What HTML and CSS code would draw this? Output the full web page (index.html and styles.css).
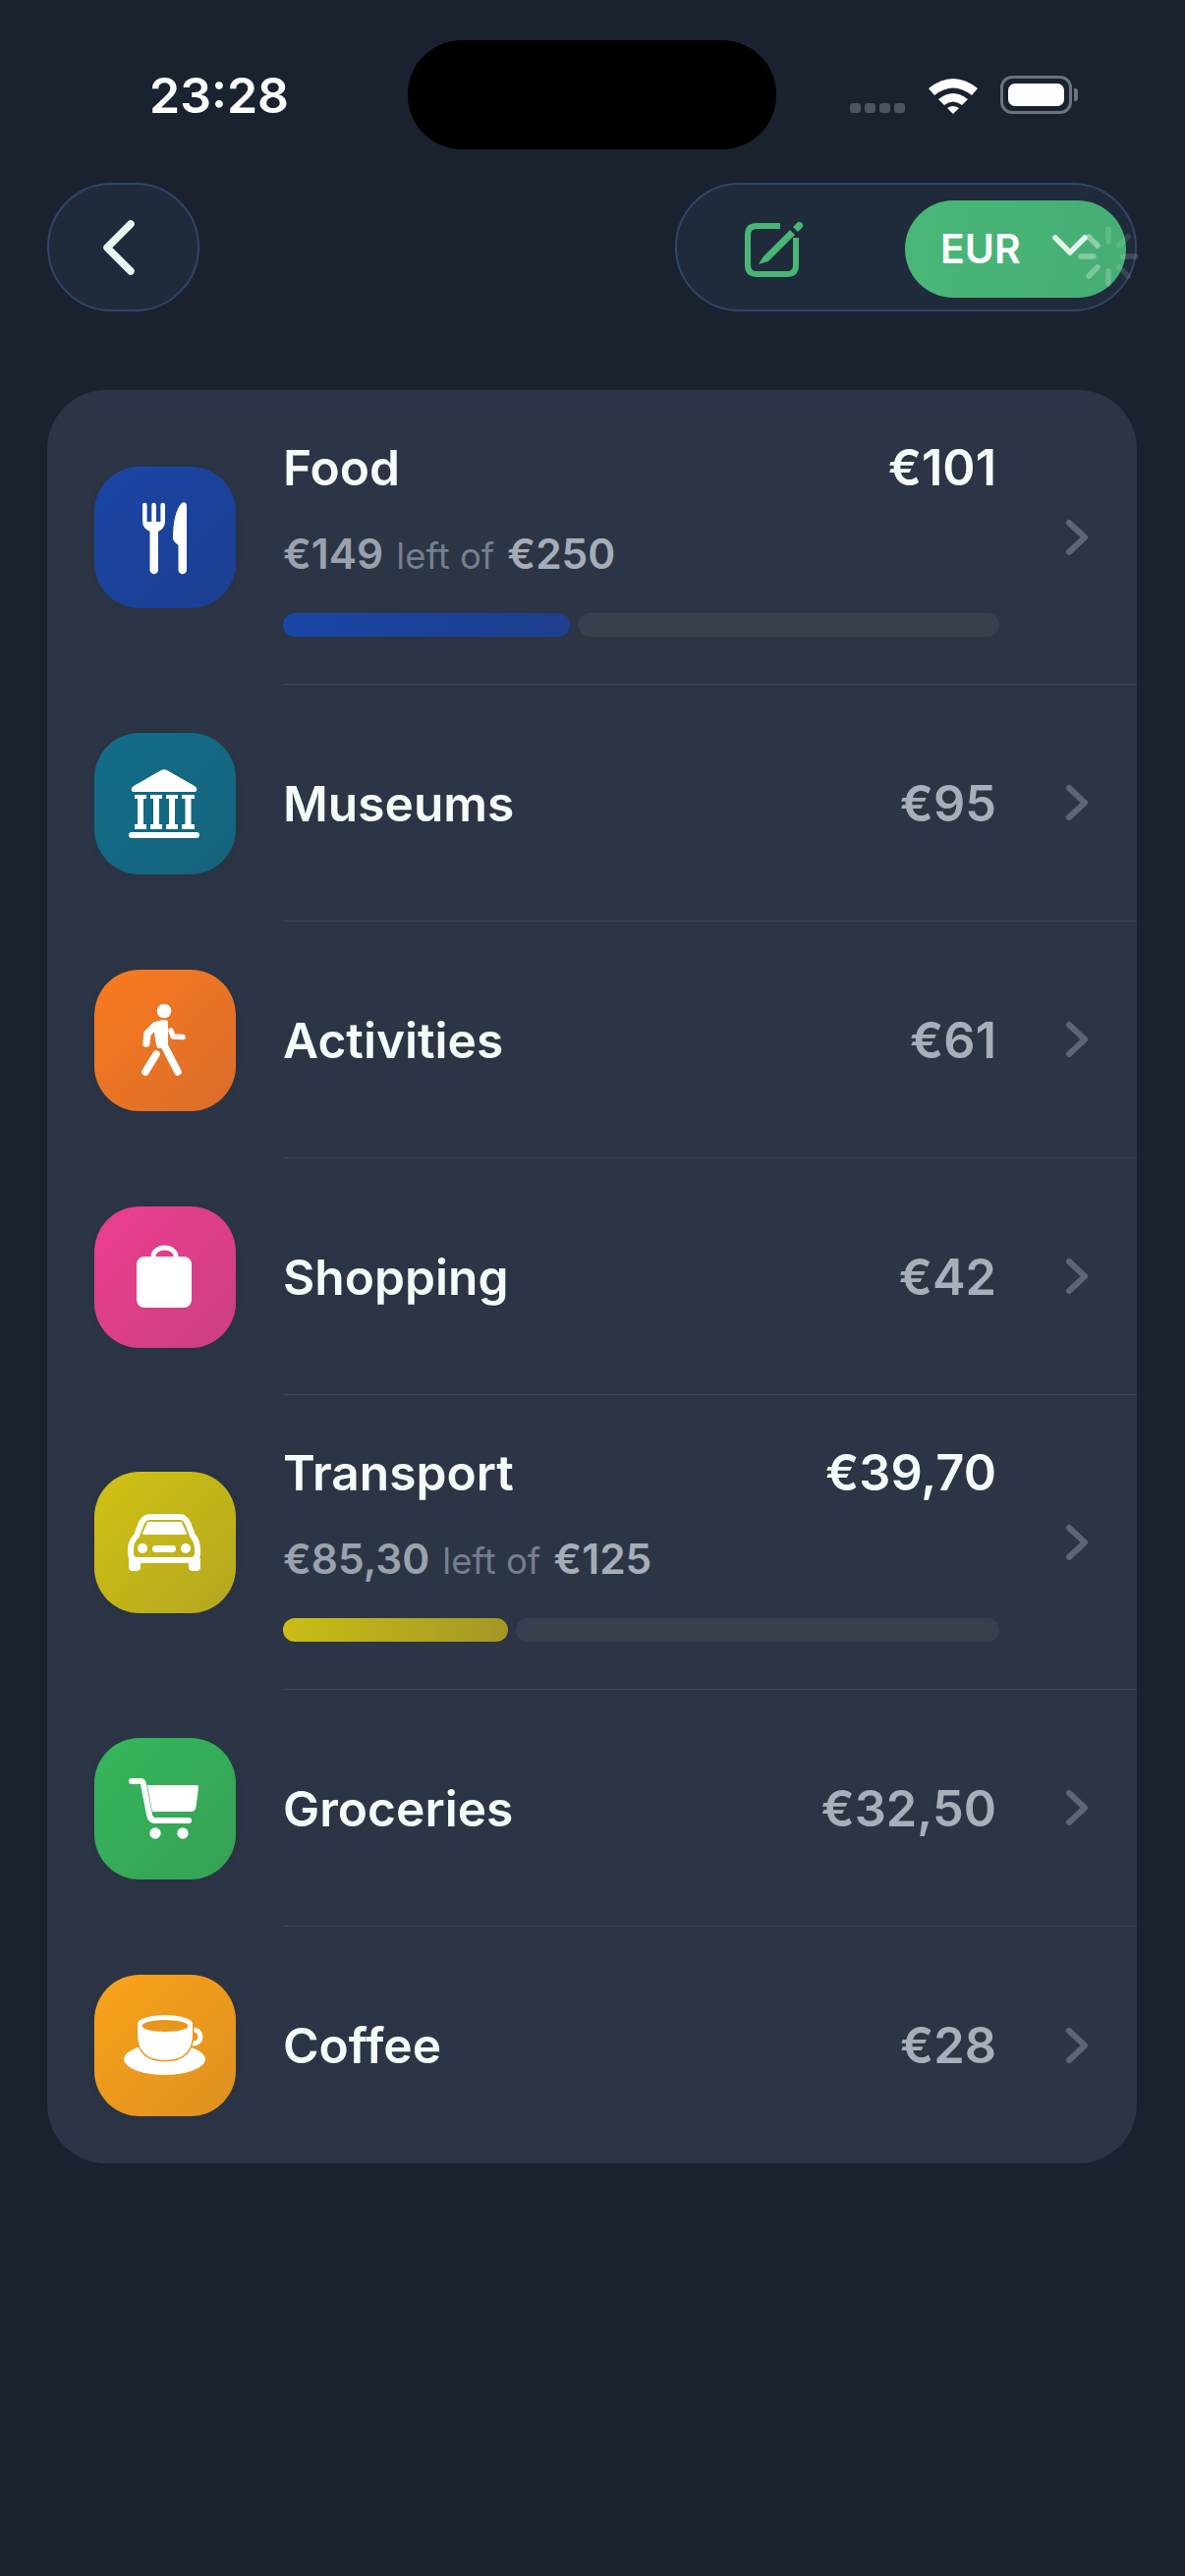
FILE: index.html
```html
<!DOCTYPE html>
<html lang="en">
<head>
    <meta charset="UTF-8">
    <meta name="viewport" content="width=device-width, initial-scale=1.0">
    <title>Budget categories</title>
    <link rel="stylesheet" href="styles.css">
</head>
<body>
    <div class="status-bar">
        <div class="status-time">23:28</div>
        <div class="island"></div>
        <div class="status-icons">
            <div class="signal"><span></span><span></span><span></span><span></span></div>
            <svg class="wifi" width="52" height="38" viewBox="0 0 52 38">
                <path d="M1 12 Q26 -8 51 12 L45 19 Q26 4 7 19 Z" fill="#fff"/>
                <path d="M11 23 Q26 11 41 23 L35 29 Q26 22 17 29 Z" fill="#fff"/>
                <path d="M20 32 Q26 28 32 32 L26 38 Z" fill="#fff"/>
            </svg>
            <div class="battery"><div class="battery-fill"></div></div>
            <div class="battery-tip"></div>
        </div>
    </div>

    <div class="toolbar">
        <button class="back-btn">
            <svg width="34" height="56" viewBox="0 0 34 56">
                <path d="M29 4 L5 28 L29 52" fill="none" stroke="#e8f6f1" stroke-width="7.500" stroke-linecap="round" stroke-linejoin="round"/>
            </svg>
        </button>
        <div class="actions">
            <svg class="edit-icon" width="62" height="62" viewBox="0 0 62 62">
                <path d="M36 8 H12 Q3 8 3 17 V48 Q3 57 12 57 H43 Q52 57 52 48 V20" fill="none" stroke="#47b676" stroke-width="6"/>
                <path d="M19 39 L46 12 L51 17 L24 44 L14 47 Z" fill="#47b676"/>
                <path d="M49 9 L53 5 A3 3 0 0 1 58 10 L54 14 Z" fill="#47b676"/>
            </svg>
            <div class="currency">
                <span class="currency-code">EUR</span>
                <svg class="currency-chevron" width="36" height="22" viewBox="0 0 36 22">
                    <path d="M3 3 L18 18 L33 3" fill="none" stroke="#e3f6ea" stroke-width="5.500" stroke-linecap="round" stroke-linejoin="round"/>
                </svg>
            </div>
            <svg class="spinner" width="64" height="64" viewBox="0 0 64 64">
                <g stroke="#fff" stroke-width="5.500" stroke-linecap="round" fill="none">
                    <path d="M32 4 V17" opacity="0.15"/>
                    <path d="M52 12 L43 21" opacity="0.12"/>
                    <path d="M60 32 H47" opacity="0.15"/>
                    <path d="M52 52 L43 43" opacity="0.12"/>
                    <path d="M32 60 V47" opacity="0.2"/>
                    <path d="M12 52 L21 43" opacity="0.3"/>
                    <path d="M4 32 H17" opacity="0.35"/>
                    <path d="M12 12 L21 21" opacity="0.4"/>
                </g>
            </svg>
        </div>
    </div>

    <div class="card">
        <div class="row row-budget">
            <div class="tile tile-food">
                <svg width="144" height="144" viewBox="0 0 144 144" fill="#fff">
                    <path d="M49 39 a2.300 2.300 0 0 1 4.600 0 V56 h4.700 V39 a2.300 2.300 0 0 1 4.600 0 V56 h4.500 V39 a2.300 2.300 0 0 1 4.600 0 V55 Q72 63 65 66 V105 a4 4 0 0 1 -8.500 0 V66 Q49 63 49 55 Z"/>
                    <path d="M94 39 a3 3 0 0 0 -5 -2 C83 43 80 56 80 73 Q80 76 85.500 80 V105 a4.250 4.250 0 0 0 8.500 0 Z"/>
                </svg>
            </div>
            <div class="row-body">
                <div class="row-main">
                    <div class="row-top">
                        <span class="name">Food</span>
                        <span class="amount amount-bright">€101</span>
                    </div>
                    <div class="budget-line">
                        <span class="left-value">€149</span>
                        <span class="left-of">left of</span>
                        <span class="total-value">€250</span>
                    </div>
                    <div class="progress">
                        <div class="progress-fill fill-food" style="width: 292px"></div>
                        <div class="progress-track"></div>
                    </div>
                </div>
                <svg class="chevron" width="24" height="38" viewBox="0 0 24 38"><path d="M4 4 L20 19 L4 34" /></svg>
            </div>
        </div>

        <div class="row">
            <div class="tile tile-museums">
                <svg width="144" height="144" viewBox="0 0 144 144" fill="#fff">
                    <path d="M68 38 Q71 36.500 74 38 L102 54 Q105 56 104 59 Q103.500 60 102 60 H40 Q38.500 60 38 59 Q37 56 40 54 Z"/>
                    <g>
                        <path d="M41 63 H53 V67 H50 V93 H53 V98 H41 V93 H44 V67 H41 Z"/>
                        <path d="M57 63 H69 V67 H66 V93 H69 V98 H57 V93 H60 V67 H57 Z"/>
                        <path d="M73 63 H85 V67 H82 V93 H85 V98 H73 V93 H76 V67 H73 Z"/>
                        <path d="M89 63 H102 V67 H98.500 V93 H102 V98 H89 V93 H92.500 V67 H89 Z"/>
                    </g>
                    <rect x="35" y="101" width="72" height="6" rx="3"/>
                </svg>
            </div>
            <div class="row-body">
                <div class="row-main">
                    <div class="row-top">
                        <span class="name">Museums</span>
                        <span class="amount">€95</span>
                    </div>
                </div>
                <svg class="chevron" width="24" height="38" viewBox="0 0 24 38"><path d="M4 4 L20 19 L4 34" /></svg>
            </div>
        </div>

        <div class="row">
            <div class="tile tile-activities">
                <svg width="144" height="144" viewBox="0 0 144 144" fill="#fff">
                    <circle cx="71" cy="42" r="7.300"/>
                    <path d="M60 54 Q68 50 75 52 V76 L72 80 H64 L62 72 Z"/>
                    <g fill="none" stroke="#fff" stroke-linecap="round" stroke-linejoin="round">
                        <path d="M62 57 L54 65 L53 75" stroke-width="7.500"/>
                        <path d="M71 77 L85 104" stroke-width="7.500"/>
                        <path d="M63 86 L52 104" stroke-width="7.500"/>
                        <path d="M78 62 L80 68 L90 68.500" stroke-width="5.500"/>
                    </g>
                </svg>
            </div>
            <div class="row-body">
                <div class="row-main">
                    <div class="row-top">
                        <span class="name">Activities</span>
                        <span class="amount">€61</span>
                    </div>
                </div>
                <svg class="chevron" width="24" height="38" viewBox="0 0 24 38"><path d="M4 4 L20 19 L4 34" /></svg>
            </div>
        </div>

        <div class="row">
            <div class="tile tile-shopping">
                <svg width="144" height="144" viewBox="0 0 144 144" fill="#fff">
                    <rect x="43" y="51" width="56" height="52" rx="8"/>
                    <path d="M60 53 V51 A11.500 9 0 0 1 83 51 V53" fill="none" stroke="#fff" stroke-width="5"/>
                </svg>
            </div>
            <div class="row-body">
                <div class="row-main">
                    <div class="row-top">
                        <span class="name">Shopping</span>
                        <span class="amount">€42</span>
                    </div>
                </div>
                <svg class="chevron" width="24" height="38" viewBox="0 0 24 38"><path d="M4 4 L20 19 L4 34" /></svg>
            </div>
        </div>

        <div class="row row-budget row-transport">
            <div class="tile tile-transport">
                <svg width="144" height="144" viewBox="0 0 144 144" fill="#fff">
                    <path d="M37 79 Q37 71 43 65 L48 52 Q51 46 57 46 H87 Q92 46 95 52 L100 65 Q105 71 105 79 V83 Q105 90 98 90 H44 Q37 90 37 83 Z" fill="none" stroke="#fff" stroke-width="6"/>
                    <path d="M55 52 H88 L93 63 H50 Z" stroke="#fff" stroke-width="2" stroke-linejoin="round"/>
                    <path d="M35 88 H47 V97 Q47 101 43 101 H39 Q35 101 35 97 Z"/>
                    <path d="M96 88 H108 V97 Q108 101 104 101 H100 Q96 101 96 97 Z"/>
                    <circle cx="49" cy="78" r="5"/>
                    <circle cx="93" cy="78" r="5"/>
                    <rect x="59" y="75" width="24" height="7" rx="3.500"/>
                </svg>
            </div>
            <div class="row-body">
                <div class="row-main">
                    <div class="row-top">
                        <span class="name">Transport</span>
                        <span class="amount amount-bright">€39,70</span>
                    </div>
                    <div class="budget-line">
                        <span class="left-value">€85,30</span>
                        <span class="left-of">left of</span>
                        <span class="total-value">€125</span>
                    </div>
                    <div class="progress">
                        <div class="progress-fill fill-transport" style="width: 229px"></div>
                        <div class="progress-track"></div>
                    </div>
                </div>
                <svg class="chevron" width="24" height="38" viewBox="0 0 24 38"><path d="M4 4 L20 19 L4 34" /></svg>
            </div>
        </div>

        <div class="row">
            <div class="tile tile-groceries">
                <svg width="144" height="144" viewBox="0 0 144 144" fill="#fff">
                    <path d="M38 44 H47 Q49.500 44 50 47 L56 78 Q57 84 62 84 H96" fill="none" stroke="#fff" stroke-width="6" stroke-linecap="round" stroke-linejoin="round"/>
                    <path d="M54 48 H104 Q106.500 48 106 51 L103.500 70 Q103 75 98 75 H59 Z"/>
                    <circle cx="62" cy="97" r="5.700"/>
                    <circle cx="90" cy="97" r="5.700"/>
                </svg>
            </div>
            <div class="row-body">
                <div class="row-main">
                    <div class="row-top">
                        <span class="name">Groceries</span>
                        <span class="amount">€32,50</span>
                    </div>
                </div>
                <svg class="chevron" width="24" height="38" viewBox="0 0 24 38"><path d="M4 4 L20 19 L4 34" /></svg>
            </div>
        </div>

        <div class="row row-last">
            <div class="tile tile-coffee">
                <svg width="144" height="144" viewBox="0 0 144 144" fill="#fff">
                    <ellipse cx="71.500" cy="86" rx="41.500" ry="16"/>
                    <circle cx="101" cy="63" r="7" fill="none" stroke="#fff" stroke-width="5"/>
                    <path d="M44 50 V60 Q44 87 72 87 Q100 87 100 60 V50 Z" stroke="#eb981d" stroke-width="3" paint-order="stroke"/>
                    <ellipse cx="72" cy="50" rx="28" ry="9"/>
                    <ellipse cx="72" cy="52" rx="23.500" ry="6" fill="#e9961c"/>
                </svg>
            </div>
            <div class="row-body">
                <div class="row-main">
                    <div class="row-top">
                        <span class="name">Coffee</span>
                        <span class="amount">€28</span>
                    </div>
                </div>
                <svg class="chevron" width="24" height="38" viewBox="0 0 24 38"><path d="M4 4 L20 19 L4 34" /></svg>
            </div>
        </div>
    </div>
</body>
</html>
```

FILE: styles.css
```css
* {
    box-sizing: border-box;
}
body {
    font-family: Inter, "Liberation Sans", sans-serif;
    background-color: #1a2230;
    margin: 0;
    padding: 0;
    height: 2622px;
    overflow: hidden;
    color: #f4fbf8;
}

/* status bar */
.status-bar {
    display: flex;
    align-items: center;
    padding-top: 41px;
}
.status-time {
    width: 415px;
    padding-left: 152px;
    font-size: 50px;
    font-weight: 600;
    color: #fff;
}
.island {
    width: 375px;
    height: 111px;
    border-radius: 55px;
    background: #000;
}
.status-icons {
    display: flex;
    align-items: flex-end;
    padding-left: 75px;
}
.signal {
    display: flex;
    gap: 4px;
    margin-right: 23px;
    margin-bottom: 1px;
}
.signal span {
    width: 11px;
    height: 10px;
    border-radius: 3px;
    background: #4c5361;
}
.wifi {
    margin-right: 22px;
}
.battery {
    width: 73px;
    height: 39px;
    padding: 5px;
    border: 3px solid #6b7280;
    border-radius: 12px;
}
.battery-fill {
    height: 100%;
    border-radius: 7px;
    background: #fff;
}
.battery-tip {
    width: 4px;
    height: 13px;
    margin: 0 0 13px 2px;
    border-radius: 0 3px 3px 0;
    background: #6b7280;
}

/* toolbar */
.toolbar {
    display: flex;
    justify-content: space-between;
    margin-top: 34px;
    padding: 0 49px 0 48px;
}
.back-btn {
    display: flex;
    align-items: center;
    justify-content: center;
    width: 155px;
    height: 131px;
    padding: 0 10px 0 0;
    border: 2px solid #314567;
    border-radius: 66px;
    background: #1f2b3b;
}
.actions {
    position: relative;
    display: flex;
    align-items: center;
    width: 470px;
    height: 131px;
    border: 2px solid #314567;
    border-radius: 66px;
    background: #1f2b3b;
}
.edit-icon {
    margin-left: 69px;
    margin-top: 3px;
}
.currency {
    display: flex;
    align-items: center;
    width: 225px;
    height: 99px;
    margin-left: 101px;
    margin-top: 3px;
    padding-left: 36px;
    border-radius: 50px;
    background: linear-gradient(100deg, #48b878, #46ad74);
}
.currency-code {
    font-size: 41px;
    font-weight: 600;
    color: #fff;
}
.currency-chevron {
    margin-left: 32px;
    margin-top: -6px;
}
.spinner {
    position: absolute;
    left: 407px;
    top: 41px;
}

/* list */
.card {
    margin: 80px 49px 0 48px;
    border-radius: 60px;
    background: #2c3545;
    overflow: hidden;
}
.row {
    display: flex;
    align-items: center;
    height: 241px;
    padding-left: 48px;
}
.row-budget {
    height: 300px;
}
.tile {
    flex-shrink: 0;
    width: 144px;
    height: 144px;
    margin-right: 48px;
    border-radius: 46px;
    box-shadow: 0 2px 10px rgba(20, 25, 35, 0.08);
}
.tile svg {
    display: block;
}
.tile-food { background: linear-gradient(135deg, #1a46a6, #1c3f90); }
.tile-museums { background: linear-gradient(135deg, #126e8b, #15627a); }
.tile-activities { background: linear-gradient(135deg, #f97b1f, #d96c2b); }
.tile-shopping { background: linear-gradient(135deg, #ee3e90, #c94080); }
.tile-transport { background: linear-gradient(135deg, #d0c213, #b4a720); }
.tile-groceries { background: linear-gradient(135deg, #35b75b, #36a056); }
.tile-coffee { background: linear-gradient(135deg, #faa21a, #dd9120); }

.row-body {
    flex: 1;
    display: flex;
    align-items: center;
    align-self: stretch;
    padding-right: 49px;
    border-bottom: 1px solid #3e4656;
}
.row-last .row-body {
    border-bottom: none;
}
.row-main {
    flex: 1;
    min-width: 0;
}
.row-top {
    display: flex;
    justify-content: space-between;
    align-items: baseline;
    padding-right: 3px;
}
.name {
    font-size: 49.700px;
    font-weight: 600;
    color: #f4fbf8;
}
.amount {
    font-size: 50.500px;
    font-weight: 600;
    color: #a8afba;
}
.amount-bright {
    color: #f4fbf8;
}
.budget-line {
    display: flex;
    align-items: baseline;
    gap: 13px;
    margin-top: 32px;
    font-size: 42.500px;
    font-weight: 600;
    color: #9aa2ae;
}
.left-of {
    font-size: 36.500px;
    font-weight: 400;
    color: #767f8d;
}
.total-value {
    color: #a6adb8;
}
.progress {
    display: flex;
    gap: 8px;
    height: 24px;
    margin-top: 35px;
}
.progress-fill {
    border-radius: 12px;
}
.fill-food {
    background: linear-gradient(90deg, #1a46a6, #1d3f8c);
}
.fill-transport {
    background: linear-gradient(90deg, #cbbd14, #a39827);
}
.progress-track {
    flex: 1;
    border-radius: 12px;
    background: #383f4d;
}
.chevron {
    flex-shrink: 0;
    margin-left: 67px;
}
.chevron path {
    fill: none;
    stroke: #5d6675;
    stroke-width: 6;
    stroke-linecap: round;
    stroke-linejoin: round;
}
```
